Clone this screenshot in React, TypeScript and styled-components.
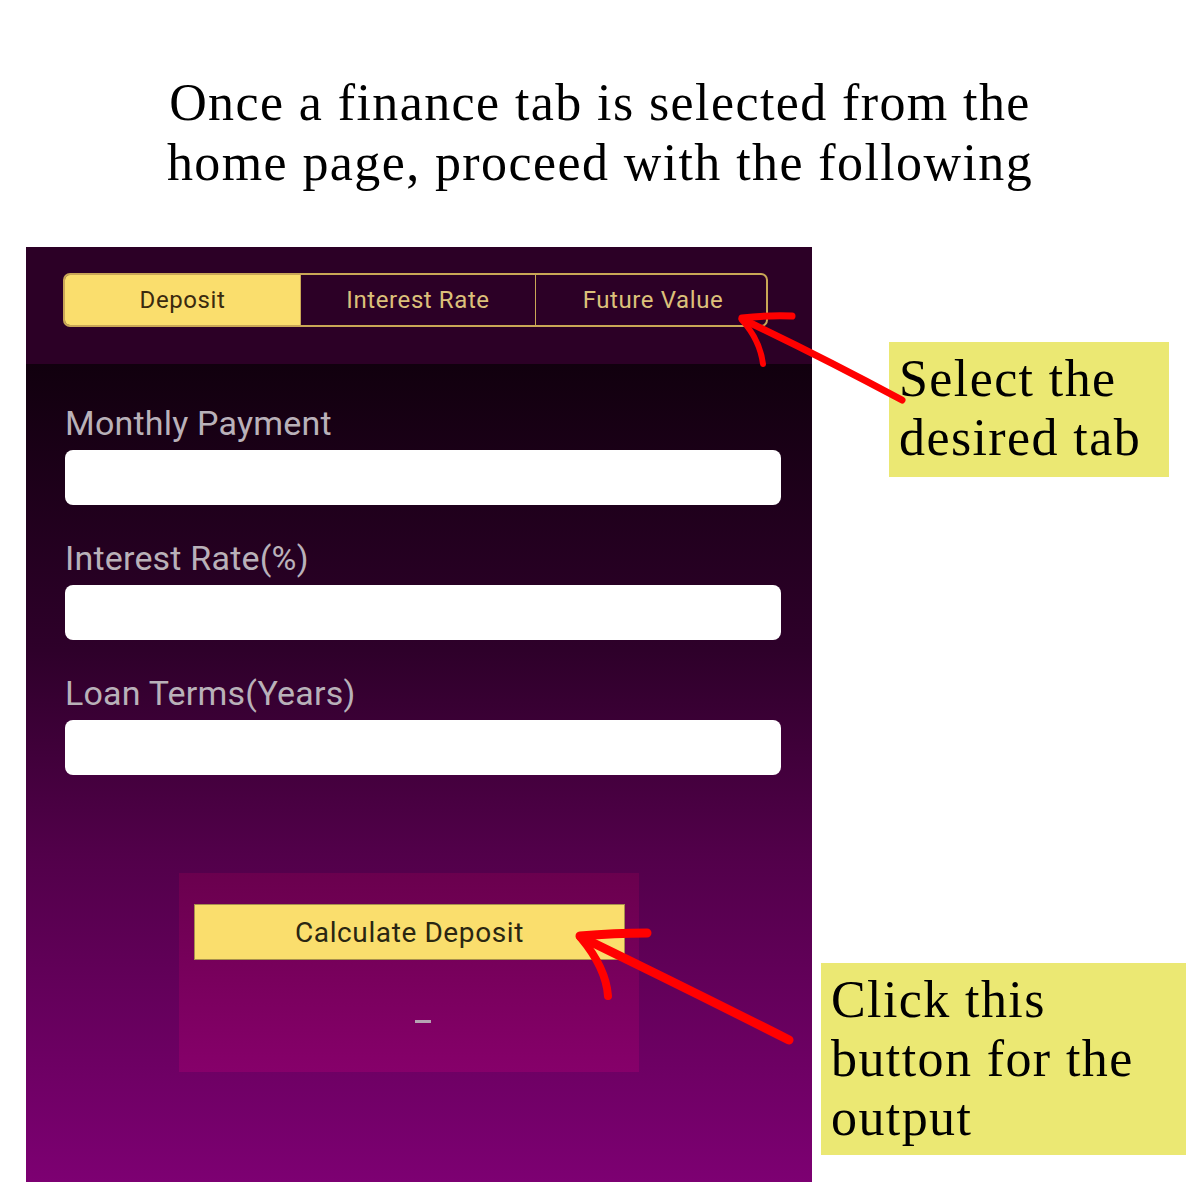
import React from "react";
import styled, { createGlobalStyle } from "styled-components";

const Global = createGlobalStyle`
  html, body { margin: 0; padding: 0; background: #ffffff; }
  * { box-sizing: border-box; }
`;

const Page = styled.div`
  position: relative;
  width: 1200px;
  height: 1200px;
  background: #ffffff;
  overflow: hidden;
`;

const Title = styled.h1`
  margin: 73px 0 0 0;
  text-align: center;
  font-family: "Liberation Serif", serif;
  font-weight: 400;
  font-size: 52px;
  letter-spacing: 1.4px;
  line-height: 60px;
  color: #000;
`;

const Row = styled.div`
  display: flex;
  margin-top: 54px;
`;

const Phone = styled.div`
  margin-left: 26px;
  width: 786px;
  height: 935px;
  display: flex;
  flex-direction: column;
  font-family: Roboto, "Liberation Sans", sans-serif;
`;

const Header = styled.div`
  height: 117px;
  background: #2c0026;
  padding: 26px 0 0 37px;
`;

const Tabs = styled.div`
  display: grid;
  grid-template-columns: repeat(3, 235px);
  width: 705px;
  height: 54px;
  border: 2px solid #c9a756;
  border-radius: 7px;
  overflow: hidden;
`;

const Tab = styled.div<{ $active?: boolean }>`
  display: flex;
  align-items: center;
  justify-content: center;
  font-size: 24px;
  letter-spacing: 0.6px;
  background: ${(p) => (p.$active ? "#fade6d" : "transparent")};
  color: ${(p) => (p.$active ? "#3a2a0e" : "#dcc07a")};
  & + & {
    border-left: 1.5px solid #c9a756;
  }
`;

const Body = styled.div`
  flex: 1;
  background: linear-gradient(180deg, #11000e 0%, #2e002a 35%, #52004a 60%, #7d0072 100%);
  padding: 40px 31px 0 39px;
  display: flex;
  flex-direction: column;
`;

const Field = styled.div`
  display: flex;
  flex-direction: column;
  gap: 8px;
  & + & {
    margin-top: 34px;
  }
`;

const Label = styled.label`
  font-size: 34px;
  line-height: 38px;
  color: #b9b1b9;
  letter-spacing: 0.2px;
`;

const Input = styled.div`
  height: 55px;
  background: #ffffff;
  border-radius: 8px;
`;

const ResultBox = styled.div`
  margin: 98px 0 0 114px;
  width: 460px;
  height: 199px;
  background: linear-gradient(180deg, #6a004e 0%, #86006a 100%);
  padding: 31px 14px 0 15px;
  display: flex;
  flex-direction: column;
  align-items: flex-start;
`;

const CalcButton = styled.button`
  width: 431px;
  height: 56px;
  padding: 0;
  background: #fade6d;
  border: 1px solid #a88f4c;
  border-radius: 0;
  font-family: Roboto, "Liberation Sans", sans-serif;
  font-size: 28px;
  letter-spacing: 0.6px;
  color: #2a2612;
  cursor: pointer;
`;

const Dash = styled.div`
  width: 16px;
  height: 3px;
  background: #b5a3b3;
  margin: 60px 0 0 221px;
`;

const Callouts = styled.div`
  display: flex;
  flex-direction: column;
  align-items: flex-start;
`;

const Callout = styled.div<{ $mt: number; $ml: number; $w: number; $h: number }>`
  margin-top: ${(p) => p.$mt}px;
  margin-left: ${(p) => p.$ml}px;
  width: ${(p) => p.$w}px;
  height: ${(p) => p.$h}px;
  background: #ebe873;
  padding: 7px 0 0 10px;
  font-family: "Liberation Serif", serif;
  font-size: 52px;
  letter-spacing: 1.4px;
  line-height: 59px;
  color: #000;
  white-space: nowrap;
`;

const Overlay = styled.svg`
  position: absolute;
  left: 0;
  top: 0;
  width: 1200px;
  height: 1200px;
  pointer-events: none;
`;

export default function App() {
  return (
    <Page>
      <Global />
      <Title>
        Once a finance tab is selected from the
        <br />
        home page, proceed with the following
      </Title>
      <Row>
        <Phone>
          <Header>
            <Tabs>
              <Tab $active>Deposit</Tab>
              <Tab>Interest Rate</Tab>
              <Tab>Future Value</Tab>
            </Tabs>
          </Header>
          <Body>
            <Field>
              <Label>Monthly Payment</Label>
              <Input />
            </Field>
            <Field>
              <Label>Interest Rate(%)</Label>
              <Input />
            </Field>
            <Field>
              <Label>Loan Terms(Years)</Label>
              <Input />
            </Field>
            <ResultBox>
              <CalcButton>Calculate Deposit</CalcButton>
              <Dash />
            </ResultBox>
          </Body>
        </Phone>
        <Callouts>
          <Callout $mt={95} $ml={77} $w={280} $h={135}>
            Select the
            <br />
            desired tab
          </Callout>
          <Callout $mt={486} $ml={9} $w={365} $h={192}>
            Click this
            <br />
            button for the
            <br />
            output
          </Callout>
        </Callouts>
      </Row>
      <Overlay viewBox="0 0 1200 1200">
        <g fill="none" stroke="#ff0000" strokeLinecap="round" strokeLinejoin="round">
          <path d="M902 400 Q 820 356 742 319" strokeWidth="7" />
          <path d="M742 318 Q 768 315 792 316" strokeWidth="7" />
          <path d="M742 320 Q 760 340 763 364" strokeWidth="6" />
          <path d="M789 1040 Q 690 990 581 937" strokeWidth="9" />
          <path d="M580 936 Q 615 933 647 933" strokeWidth="9" />
          <path d="M581 938 Q 606 968 608 996" strokeWidth="8" />
        </g>
      </Overlay>
    </Page>
  );
}
